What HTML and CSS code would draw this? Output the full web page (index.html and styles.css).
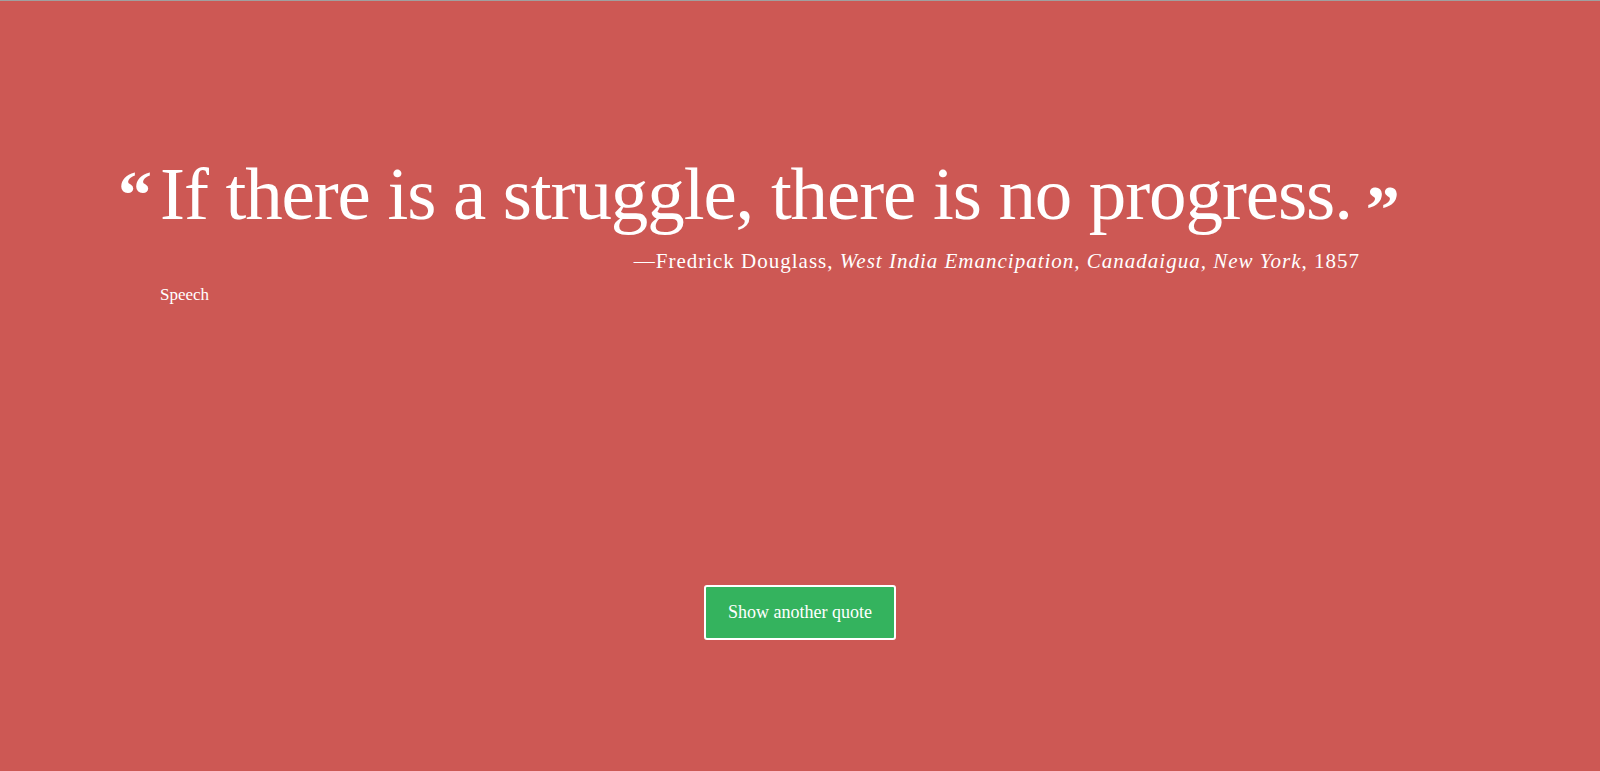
FILE: index.html
```html
<!DOCTYPE html>
<html>
<head>
<meta charset="utf-8">
<link rel="stylesheet" href="styles.css">
</head>
<body>
<main class="page">
  <section class="quote-box">
    <blockquote class="quote">
      <span class="mark open">&ldquo;</span><span class="text">If there is a struggle, there is no progress.</span><span class="mark close">&rdquo;</span>
    </blockquote>
    <div class="cite-row">
      <cite class="cite">&mdash;Fredrick Douglass, <i>West India Emancipation, Canadaigua, New York</i>, 1857</cite>
    </div>
    <div class="source">Speech</div>
  </section>
  <div class="actions">
    <button class="btn">Show another quote</button>
  </div>
</main>
</body>
</html>
```

FILE: styles.css
```css
html, body {
  margin: 0;
  padding: 0;
  height: 100%;
}
body {
  background: #cd5854;
  border-top: 1px solid #a0a0a0;
  box-sizing: border-box;
  color: #fff;
  font-family: "Liberation Serif", "DejaVu Serif", serif;
  overflow: hidden;
}
.page {
  display: flex;
  flex-direction: column;
  height: 100%;
}
.quote-box {
  padding: 148px 0 0 118px;
}
.quote {
  margin: 0;
  display: flex;
  align-items: flex-start;
  line-height: 1;
}
.mark {
  font-size: 68px;
  font-weight: bold;
  line-height: 1;
}
.open {
  width: 42px;
  margin-top: 12px;
}
.close {
  margin-left: 14px;
  margin-top: 26px;
}
.text {
  font-size: 75px;
  letter-spacing: -1.1px;
  line-height: 90px;
  white-space: nowrap;
}
.cite-row {
  display: flex;
  justify-content: flex-end;
  width: 1242px;
  margin-top: 4px;
}
.cite {
  font-style: normal;
  font-size: 21px;
  letter-spacing: 1px;
  line-height: 28px;
}
.source {
  margin: 10px 0 0 42px;
  font-size: 17px;
  line-height: 20px;
}
.actions {
  display: flex;
  justify-content: center;
  margin-top: 280px;
}
.btn {
  background: #34b35e;
  color: #fff;
  border: 2px solid #fff;
  border-radius: 3px;
  width: 192px;
  height: 55px;
  font-family: "Liberation Serif", "DejaVu Serif", serif;
  font-size: 18px;
  cursor: pointer;
}
```
